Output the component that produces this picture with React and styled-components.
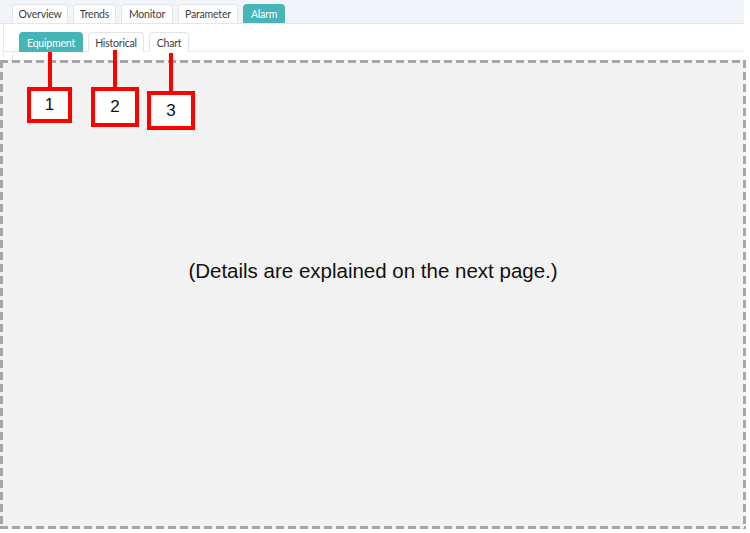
import React from 'react'
import styled, { createGlobalStyle } from 'styled-components'

const GlobalStyle = createGlobalStyle`
  html, body {
    margin: 0;
    padding: 0;
    background: #ffffff;
  }
  body {
    width: 750px;
    height: 533px;
    overflow: hidden;
  }
`

const Page = styled.div`
  position: relative;
  width: 746px;
  height: 533px;
  font-family: 'Lato', 'Liberation Sans', sans-serif;
`

const TopBar = styled.div`
  display: flex;
  align-items: flex-end;
  gap: 5px;
  height: 24px;
  padding-left: 12px;
  width: 744px;
  box-sizing: border-box;
  background: #f1f5f9;
  border-bottom: 1px solid #e2e7ed;
`

const Tab = styled.div`
  width: ${p => p.$w}px;
  height: 19px;
  box-sizing: border-box;
  display: flex;
  align-items: center;
  justify-content: center;
  font-size: 10.5px;
  letter-spacing: -0.2px;
  white-space: nowrap;
  color: ${p => (p.$active ? '#ffffff' : '#3d3d3d')};
  background: ${p => (p.$active ? '#47b5b7' : '#ffffff')};
  border: 1px solid ${p => (p.$active ? '#47b5b7' : '#e1e5ea')};
  border-bottom: none;
  border-radius: 4px 4px 0 0;
`

const Panel = styled.div`
  margin-left: 3px;
  width: 741px;
  background: #ffffff;
  border-left: 1px solid #e8ecf0;
  box-sizing: border-box;
`

const SubBar = styled.div`
  display: flex;
  gap: 5px;
  padding: 8px 0 0 15px;
  height: 28px;
  box-sizing: border-box;
  border-bottom: 1px solid #e6eaee;
`

const SubTab = styled(Tab)`
  height: 20px;
`

const InnerEdge = styled.div`
  margin-left: 8px;
  height: 10px;
  border-left: 1px solid #e6eaee;
  border-top: 1px solid #e6eaee;
  border-radius: 5px 0 0 0;
  margin-top: -1px;
`

const dashH = 'repeating-linear-gradient(90deg, #a6a6a6 0 8px, transparent 8px 12px)'
const dashV = 'repeating-linear-gradient(180deg, #a6a6a6 0 8px, transparent 8px 12px)'

const Placeholder = styled.div`
  position: absolute;
  left: 0;
  top: 60px;
  width: 746px;
  height: 469px;
  box-sizing: border-box;
  background:
    ${dashH} left top / 100% 3px no-repeat,
    ${dashH} left bottom / 100% 3px no-repeat,
    ${dashV} left top / 3px 100% no-repeat,
    ${dashV} right top / 3px 100% no-repeat,
    #f2f2f2;
  display: flex;
  justify-content: center;
  padding-top: 199px;
`

const Note = styled.div`
  font-family: 'Liberation Sans', Arial, sans-serif;
  font-size: 20.5px;
  color: #111111;
`

const Marker = styled.div`
  position: absolute;
  left: ${p => p.$x}px;
  top: ${p => p.$y}px;
  display: flex;
  flex-direction: column;
  align-items: center;
`

const Stem = styled.div`
  width: 4px;
  height: ${p => p.$h}px;
  background: #ff0000;
`

const Box = styled.div`
  width: ${p => p.$w}px;
  height: ${p => p.$h}px;
  box-sizing: border-box;
  border: 4px solid #ff0000;
  background: #ffffff;
  display: flex;
  align-items: center;
  justify-content: center;
  font-family: 'Liberation Sans', Arial, sans-serif;
  font-size: 17px;
  color: #111111;
`

const outerTabs = [
  { label: 'Overview', w: 56 },
  { label: 'Trends', w: 43 },
  { label: 'Monitor', w: 52 },
  { label: 'Parameter', w: 60 },
  { label: 'Alarm', w: 42, active: true },
]

const subTabs = [
  { label: 'Equipment', w: 64, active: true },
  { label: 'Historical', w: 56 },
  { label: 'Chart', w: 40 },
]

const markers = [
  { n: 1, x: 27, y: 52, stem: 35, w: 45, h: 36 },
  { n: 2, x: 91, y: 50, stem: 37, w: 48, h: 40 },
  { n: 3, x: 147, y: 53, stem: 38, w: 48, h: 39 },
]

export default function App() {
  return (
    <Page>
      <GlobalStyle />
      <TopBar>
        {outerTabs.map(t => (
          <Tab key={t.label} $active={t.active} $w={t.w}>
            {t.label}
          </Tab>
        ))}
      </TopBar>
      <Panel>
        <SubBar>
          {subTabs.map(t => (
            <SubTab key={t.label} $active={t.active} $w={t.w}>
              {t.label}
            </SubTab>
          ))}
        </SubBar>
        <InnerEdge />
      </Panel>
      <Placeholder>
        <Note>(Details are explained on the next page.)</Note>
      </Placeholder>
      {markers.map(m => (
        <Marker key={m.n} $x={m.x} $y={m.y}>
          <Stem $h={m.stem} />
          <Box $w={m.w} $h={m.h}>{m.n}</Box>
        </Marker>
      ))}
    </Page>
  )
}
